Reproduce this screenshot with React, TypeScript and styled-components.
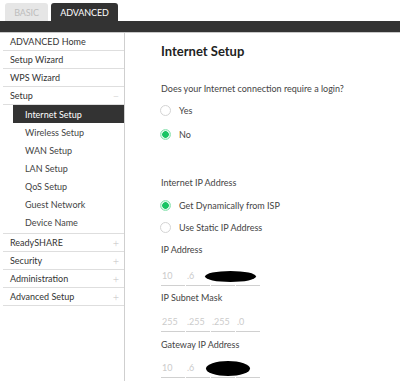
import React from "react";
import styled, { createGlobalStyle } from "styled-components";

const Global = createGlobalStyle`
  html, body { margin: 0; padding: 0; background: #fff; }
  body { font-family: Lato, "Open Sans", Arial, sans-serif; color: #333; }
  * { box-sizing: border-box; }
`;

const Page = styled.div`
  width: 400px;
  height: 381px;
  overflow: hidden;
  display: flex;
  flex-direction: column;
`;

const Header = styled.div`
  display: flex;
  flex-direction: column;
  border-bottom: 1px solid #c8c8c8;
`;

const Tabs = styled.div`
  display: flex;
  align-items: flex-end;
  gap: 3px;
  height: 21px;
  padding-left: 5px;
`;

const Tab = styled.div<{ $active?: boolean }>`
  height: 18px;
  width: ${(p) => (p.$active ? 67 : 43)}px;
  border-radius: 3px 3px 0 0;
  background: ${(p) => (p.$active ? "#333" : "#e6e6e6")};
  color: ${(p) => (p.$active ? "#fff" : "#bdbdbd")};
  font-size: 9px;
  display: flex;
  align-items: center;
  justify-content: center;
  letter-spacing: -0.1px;
`;

const DarkBar = styled.div`
  height: 11px;
  background: #333;
`;

const Body = styled.div`
  flex: 1;
  display: flex;
`;

const Sidebar = styled.nav`
  margin-left: 3px;
  width: 122px;
  border-right: 1px solid #cfcfcf;
  display: flex;
  flex-direction: column;
`;

const MenuRow = styled.div`
  height: 18px;
  border-bottom: 1px solid #dedede;
  padding: 0 3px 0 7px;
  display: flex;
  align-items: center;
  justify-content: space-between;
  font-size: 9px;
  color: #333;
`;

const Sign = styled.span`
  color: #c2c2c2;
  font-size: 11px;
  font-weight: 300;
  width: 10px;
  text-align: center;
`;

const SubMenu = styled.div`
  display: flex;
  flex-direction: column;
  padding-bottom: 2px;
  border-bottom: 1px solid #dedede;
`;

const SubRow = styled.div<{ $active?: boolean }>`
  height: 18px;
  margin-left: 10px;
  padding-left: 12px;
  display: flex;
  align-items: center;
  font-size: 9px;
  background: ${(p) => (p.$active ? "#333" : "transparent")};
  color: ${(p) => (p.$active ? "#fff" : "#444")};
`;

const Content = styled.main`
  flex: 1;
  padding: 10px 0 0 36px;
  display: flex;
  flex-direction: column;
`;

const Title = styled.h1`
  margin: 0;
  font-size: 13px;
  line-height: 16px;
  font-weight: 700;
  color: #222;
`;

const Label = styled.div<{ $mt: number }>`
  margin-top: ${(p) => p.$mt}px;
  font-size: 9px;
  line-height: 12px;
  color: #444;
`;

const RadioRow = styled.div<{ $mt: number }>`
  margin-top: ${(p) => p.$mt}px;
  height: 14px;
  display: flex;
  align-items: center;
  gap: 8px;
  font-size: 9px;
  color: #444;
`;

const Dot = styled.span<{ $on?: boolean }>`
  width: 11px;
  height: 11px;
  border-radius: 50%;
  margin-left: -1px;
  border: 1px solid ${(p) => (p.$on ? "#8fe3b3" : "#d4d4d4")};
  background: ${(p) =>
    p.$on
      ? "radial-gradient(circle, #19c463 0 3px, #d8f6e4 3.6px, #b6eecd 100%)"
      : "#fff"};
`;

const FieldRow = styled.div<{ $mt: number }>`
  position: relative;
  margin-top: ${(p) => p.$mt}px;
  display: flex;
  gap: 1px;
`;

const Field = styled.div`
  width: 24px;
  height: 20px;
  border-bottom: 1px solid #d0d0d0;
  font-size: 9px;
  color: #cbcbcb;
  display: flex;
  align-items: center;
  padding-left: 1px;
  white-space: nowrap;
`;

const Redact = styled.span<{ $l: number; $t: number; $w: number; $h: number }>`
  position: absolute;
  left: ${(p) => p.$l}px;
  top: ${(p) => p.$t}px;
  width: ${(p) => p.$w}px;
  height: ${(p) => p.$h}px;
  background: #000;
  border-radius: 50% / 50%;
`;

const Octets = ({ values }: { values: string[] }) => (
  <>
    {values.map((v, i) => (
      <Field key={i}>{i === 0 ? v : `.${v}`}</Field>
    ))}
  </>
);

export default function App() {
  return (
    <Page>
      <Global />
      <Header>
        <Tabs>
          <Tab>BASIC</Tab>
          <Tab $active>ADVANCED</Tab>
        </Tabs>
        <DarkBar />
      </Header>
      <Body>
        <Sidebar>
          <MenuRow>ADVANCED Home</MenuRow>
          <MenuRow>Setup Wizard</MenuRow>
          <MenuRow>WPS Wizard</MenuRow>
          <MenuRow>
            Setup<Sign>−</Sign>
          </MenuRow>
          <SubMenu>
            <SubRow $active>Internet Setup</SubRow>
            <SubRow>Wireless Setup</SubRow>
            <SubRow>WAN Setup</SubRow>
            <SubRow>LAN Setup</SubRow>
            <SubRow>QoS Setup</SubRow>
            <SubRow>Guest Network</SubRow>
            <SubRow>Device Name</SubRow>
          </SubMenu>
          <MenuRow>
            ReadySHARE<Sign>+</Sign>
          </MenuRow>
          <MenuRow>
            Security<Sign>+</Sign>
          </MenuRow>
          <MenuRow>
            Administration<Sign>+</Sign>
          </MenuRow>
          <MenuRow>
            Advanced Setup<Sign>+</Sign>
          </MenuRow>
        </Sidebar>
        <Content>
          <Title>Internet Setup</Title>
          <Label $mt={24}>Does your Internet connection require a login?</Label>
          <RadioRow $mt={8}>
            <Dot />
            Yes
          </RadioRow>
          <RadioRow $mt={10}>
            <Dot $on />
            No
          </RadioRow>
          <Label $mt={36}>Internet IP Address</Label>
          <RadioRow $mt={9}>
            <Dot $on />
            Get Dynamically from ISP
          </RadioRow>
          <RadioRow $mt={8}>
            <Dot />
            Use Static IP Address
          </RadioRow>
          <Label $mt={10}>IP Address</Label>
          <FieldRow $mt={10}>
            <Octets values={["10", "6", "", ""]} />
            <Redact $l={44} $t={5} $w={51} $h={11} />
          </FieldRow>
          <Label $mt={6}>IP Subnet Mask</Label>
          <FieldRow $mt={8}>
            <Octets values={["255", "255", "255", "0"]} />
          </FieldRow>
          <Label $mt={7}>Gateway IP Address</Label>
          <FieldRow $mt={7}>
            <Octets values={["10", "6", "", ""]} />
            <Redact $l={45} $t={3} $w={44} $h={15} />
          </FieldRow>
        </Content>
      </Body>
    </Page>
  );
}
